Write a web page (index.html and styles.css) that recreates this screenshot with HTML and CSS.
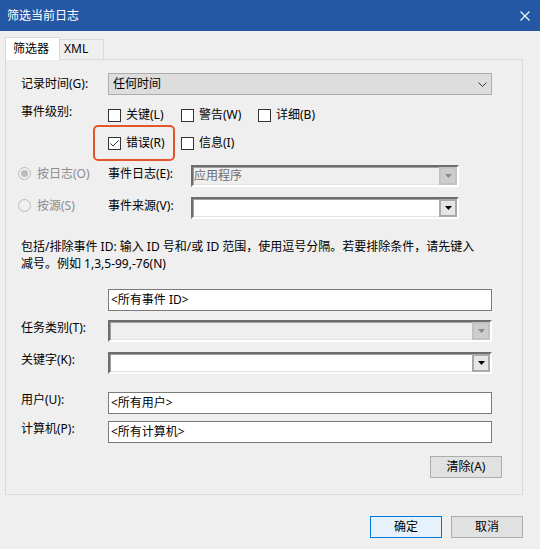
FILE: index.html
```html
<!DOCTYPE html>
<html lang="zh-CN">
<head>
<meta charset="utf-8">
<title>筛选当前日志</title>
<link rel="stylesheet" href="styles.css">
</head>
<body>
<div class="titlebar">
  <span class="title">筛选当前日志</span>
  <svg class="close" width="10" height="10" viewBox="0 0 10 10"><path d="M0.5 0.5 L9.5 9.5 M9.5 0.5 L0.5 9.5" stroke="#fff" stroke-width="1.1" fill="none"/></svg>
</div>
<div class="content">
  <div class="tabs">
    <div class="tab active">筛选器</div>
    <div class="tab xml">XML</div>
  </div>
  <div class="panel">
    <div class="frow first">
      <span class="lbl center">记录时间(G):</span>
      <div class="mselect"><span>任何时间</span><svg width="9" height="5" viewBox="0 0 9 5"><polyline points="0.5,0.5 4.5,4.5 8.5,0.5" fill="none" stroke="#333" stroke-width="1"/></svg></div>
    </div>
    <div class="levels">
      <span class="lbl lvl">事件级别:</span>
      <div class="checks">
        <label class="chk"><span class="cb"></span>关键(L)</label>
        <label class="chk"><span class="cb"></span>警告(W)</label>
        <label class="chk"><span class="cb"></span>详细(B)</label>
        <label class="chk marked"><span class="cb"><svg width="11" height="11" viewBox="0 0 11 11"><polyline points="1.5,5.5 4,8 9.5,2.5" fill="none" stroke="#333" stroke-width="1"/></svg></span>错误(R)<span class="highlight"></span></label>
        <label class="chk"><span class="cb"></span>信息(I)</label>
      </div>
    </div>
    <div class="srow first-src">
      <span class="ropt"><span class="radio on"></span>按日志(O)</span>
      <span class="slbl">事件日志(E):</span>
      <div class="cselect disabled"><span class="ctext">应用程序</span><span class="dbtn"><svg width="7" height="4" viewBox="0 0 7 4"><polygon points="0,0 7,0 3.5,4" fill="#8a8a8a"/></svg></span></div>
    </div>
    <div class="srow second-src">
      <span class="ropt"><span class="radio"></span>按源(S)</span>
      <span class="slbl">事件来源(V):</span>
      <div class="cselect"><span class="ctext"></span><span class="dbtn"><svg width="7" height="4" viewBox="0 0 7 4"><polygon points="0,0 7,0 3.5,4" fill="#000"/></svg></span></div>
    </div>
    <p class="desc">包括/排除事件 ID: 输入 ID 号和/或 ID 范围，使用逗号分隔。若要排除条件，请先键入<br>减号。例如 1,3,5-99,-76(N)</p>
    <div class="frow r-id">
      <span class="lbl"></span>
      <div class="tinput">&lt;所有事件 ID&gt;</div>
    </div>
    <div class="frow r-task">
      <span class="lbl">任务类别(T):</span>
      <div class="cselect disabled wide"><span class="ctext"></span><span class="dbtn"><svg width="7" height="4" viewBox="0 0 7 4"><polygon points="0,0 7,0 3.5,4" fill="#8a8a8a"/></svg></span></div>
    </div>
    <div class="frow r-key">
      <span class="lbl">关键字(K):</span>
      <div class="cselect wide"><span class="ctext"></span><span class="dbtn"><svg width="7" height="4" viewBox="0 0 7 4"><polygon points="0,0 7,0 3.5,4" fill="#000"/></svg></span></div>
    </div>
    <div class="frow r-user">
      <span class="lbl">用户(U):</span>
      <div class="tinput">&lt;所有用户&gt;</div>
    </div>
    <div class="frow r-comp">
      <span class="lbl">计算机(P):</span>
      <div class="tinput">&lt;所有计算机&gt;</div>
    </div>
    <div class="clear-row"><button class="btn">清除(A)</button></div>
  </div>
  <div class="footer">
    <button class="btn primary">确定</button>
    <button class="btn">取消</button>
  </div>
</div>
</body>
</html>
```
FILE: styles.css
```css
* { box-sizing: border-box; }
html, body { margin: 0; padding: 0; }
body {
  width: 540px;
  height: 549px;
  overflow: hidden;
  background: #efefef;
  color: #000;
  font-family: "Noto Sans", "Noto Sans CJK SC", sans-serif;
  font-size: 12px;
  line-height: 16px;
}
.titlebar {
  height: 31px;
  background: #2457a4;
  color: #fff;
  display: flex;
  align-items: center;
  justify-content: space-between;
  padding: 0 10px 0 7px;
}
.close { display: block; }
.content { padding: 6px 17px 0 5px; }
.tabs {
  display: flex;
  align-items: flex-end;
  height: 22px;
  position: relative;
  z-index: 1;
}
.tab {
  border: 1px solid #d9d9d9;
  border-bottom: none;
  background: #efefef;
}
.tab.active {
  width: 55px;
  height: 23px;
  margin-bottom: -1px;
  background: #fff;
  padding-left: 7px;
  line-height: 21px;
}
.tab.xml {
  width: 44px;
  height: 20px;
  border-left: none;
  padding-left: 4px;
  line-height: 18px;
}
.panel {
  width: 518px;
  border: 1px solid #d9d9d9;
  background: #efefef;
  padding: 13px 30px 16px 15px;
}
.frow {
  display: grid;
  grid-template-columns: 87px 384px;
  align-items: start;
}
.frow .lbl { line-height: 16px; padding-top: 0; }
.frow .lbl.center { align-self: center; }
.mselect {
  height: 22px;
  border: 1px solid #adadad;
  background: #dddddd;
  display: flex;
  align-items: center;
  justify-content: space-between;
  padding: 0 4px 0 4px;
}
.mselect svg { display: block; }
.levels {
  display: grid;
  grid-template-columns: 87px 1fr;
  margin-top: 10px;
}
.lvl { line-height: 14px; margin-top: 0; }
.checks {
  display: grid;
  grid-template-columns: 73px 77px auto;
  row-gap: 8px;
}
.chk {
  height: 20px;
  display: flex;
  align-items: center;
  gap: 5px;
  position: relative;
}
.cb {
  width: 13px;
  height: 13px;
  border: 1px solid #333;
  background: #fff;
  display: flex;
  align-items: center;
  justify-content: center;
  flex: none;
}
.cb svg { display: block; }
.marked { grid-column: 1; }
.highlight {
  position: absolute;
  left: -15px;
  top: -8px;
  width: 82px;
  height: 36px;
  border: 2px solid #e5552c;
  border-radius: 5px;
  pointer-events: none;
}
.srow {
  display: flex;
  align-items: flex-start;
  margin-left: -3px;
}
.first-src { margin-top: 12px; }
.second-src { margin-top: 10px; }
.ropt {
  width: 90px;
  display: flex;
  align-items: center;
  gap: 6px;
  line-height: 17px;
  color: #8c8c8c;
}
.radio {
  width: 13px;
  height: 13px;
  border: 1px solid #bcbcbc;
  border-radius: 50%;
  background: #efefef;
  display: flex;
  align-items: center;
  justify-content: center;
  flex: none;
}
.radio.on::after {
  content: "";
  width: 7px;
  height: 7px;
  border-radius: 50%;
  background: #bcbcbc;
}
.slbl { width: 83px; line-height: 17px; }
.cselect {
  width: 268px;
  height: 22px;
  display: flex;
  border-style: solid;
  border-width: 2px;
  border-color: #6d6d6d #ffffff #ffffff #6d6d6d;
  box-shadow: inset 1px 1px 0 #a0a0a0, inset -1px -1px 0 #e3e3e3;
  background: #fff;
}
.cselect.wide { width: 384px; }
.cselect.disabled { background: #efefef; }
.ctext {
  flex: 1;
  padding-left: 1px;
  line-height: 17px;
  color: #6d6d6d;
}
.dbtn {
  width: 18px;
  height: 18px;
  border: 2px solid #a9a9a9;
  background: #e6e6e6;
  display: flex;
  align-items: center;
  justify-content: center;
  flex: none;
}
.disabled .dbtn { border-color: #c2c2c2; background: #cdcdcd; }
.dbtn svg { display: block; }
.desc {
  margin: 19px -40px 0 0;
  line-height: 17px;
  white-space: nowrap;
}
.tinput {
  height: 22px;
  border: 1px solid #7a7a7a;
  background: #fff;
  padding-left: 2px;
  line-height: 20px;
}
.r-id { margin-top: 17px; }
.r-task { margin-top: 9px; }
.r-key { margin-top: 10px; }
.r-user { margin-top: 18px; }
.r-comp { margin-top: 7px; }
.clear-row {
  display: flex;
  justify-content: flex-end;
  margin: 13px -10px 0 0;
}
.btn {
  width: 72px;
  height: 22px;
  border: 1px solid #adadad;
  background: #e1e1e1;
  font-family: "Noto Sans", "Noto Sans CJK SC", sans-serif;
  font-size: 12px;
  color: #000;
  padding: 0;
  line-height: 20px;
}
.btn.primary {
  border-color: #0078d7;
  background: #e5f1fb;
}
.footer {
  display: flex;
  justify-content: flex-end;
  gap: 9px;
  margin-top: 21px;
}
```
